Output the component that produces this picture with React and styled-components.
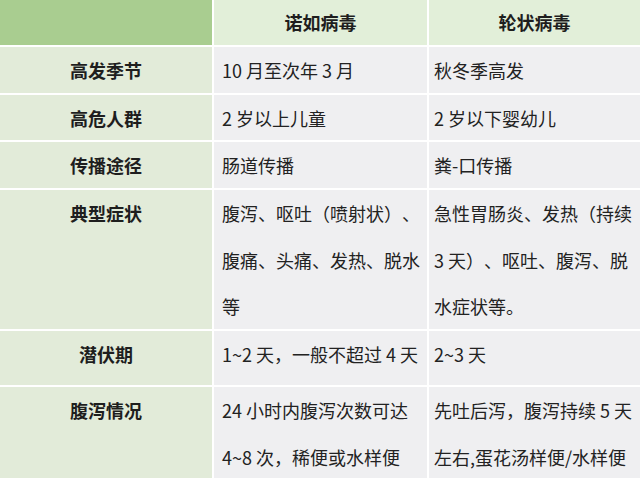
import React from "react";
import styled, { createGlobalStyle } from "styled-components";

const GlobalStyle = createGlobalStyle`
  html, body {
    margin: 0;
    padding: 0;
    background: #ffffff;
  }
  body {
    font-family: "Noto Sans CJK SC", "Noto Sans", sans-serif;
    font-kerning: none;
    text-spacing-trim: space-all;
    color: #222;
  }
`;

const Table = styled.div`
  display: grid;
  grid-template-columns: 212px 213px 211px;
  grid-template-rows: 45px 46px 45px 46px 139px 54px 92px;
  column-gap: 2px;
  row-gap: 2px;
  width: 640px;
  height: 478px;
  overflow: hidden;
  background: #ffffff;
`;

const HeadCell = styled.div`
  background: ${(p) => (p.corner ? "#a9cd90" : "#e2efd9")};
  font-size: 18px;
  font-weight: 700;
  line-height: 45px;
  text-align: center;
  color: #1e1e1e;
`;

const LabelCell = styled.div`
  background: #e2ebd9;
  font-size: 18px;
  font-weight: 700;
  line-height: 46px;
  text-align: center;
  color: #1e1e1e;
`;

const ValueCell = styled.div`
  background: #efeff1;
  font-size: 18px;
  line-height: 46.5px;
  padding-left: ${(p) => (p.last ? "5px" : "8px")};
  white-space: nowrap;
  color: #222;
`;

const rows = [
  ["高发季节", ["10 月至次年 3 月"], ["秋冬季高发"]],
  ["高危人群", ["2 岁以上儿童"], ["2 岁以下婴幼儿"]],
  ["传播途径", ["肠道传播"], ["粪-口传播"]],
  [
    "典型症状",
    ["腹泻、呕吐（喷射状）、", "腹痛、头痛、发热、脱水", "等"],
    ["急性胃肠炎、发热（持续", "3 天）、呕吐、腹泻、脱", "水症状等。"],
  ],
  ["潜伏期", ["1~2 天，一般不超过 4 天"], ["2~3 天"]],
  [
    "腹泻情况",
    ["24 小时内腹泻次数可达", "4~8 次，稀便或水样便"],
    ["先吐后泻，腹泻持续 5 天", "左右,蛋花汤样便/水样便"],
  ],
];

const Lines = ({ lines }) =>
  lines.map((l, i) => (
    <React.Fragment key={i}>
      {i > 0 && <br />}
      {l}
    </React.Fragment>
  ));

export default function App() {
  return (
    <>
      <GlobalStyle />
      <Table>
        <HeadCell corner />
        <HeadCell>诺如病毒</HeadCell>
        <HeadCell>轮状病毒</HeadCell>
        {rows.map(([label, a, b]) => (
          <React.Fragment key={label}>
            <LabelCell>{label}</LabelCell>
            <ValueCell>
              <Lines lines={a} />
            </ValueCell>
            <ValueCell last>
              <Lines lines={b} />
            </ValueCell>
          </React.Fragment>
        ))}
      </Table>
    </>
  );
}
